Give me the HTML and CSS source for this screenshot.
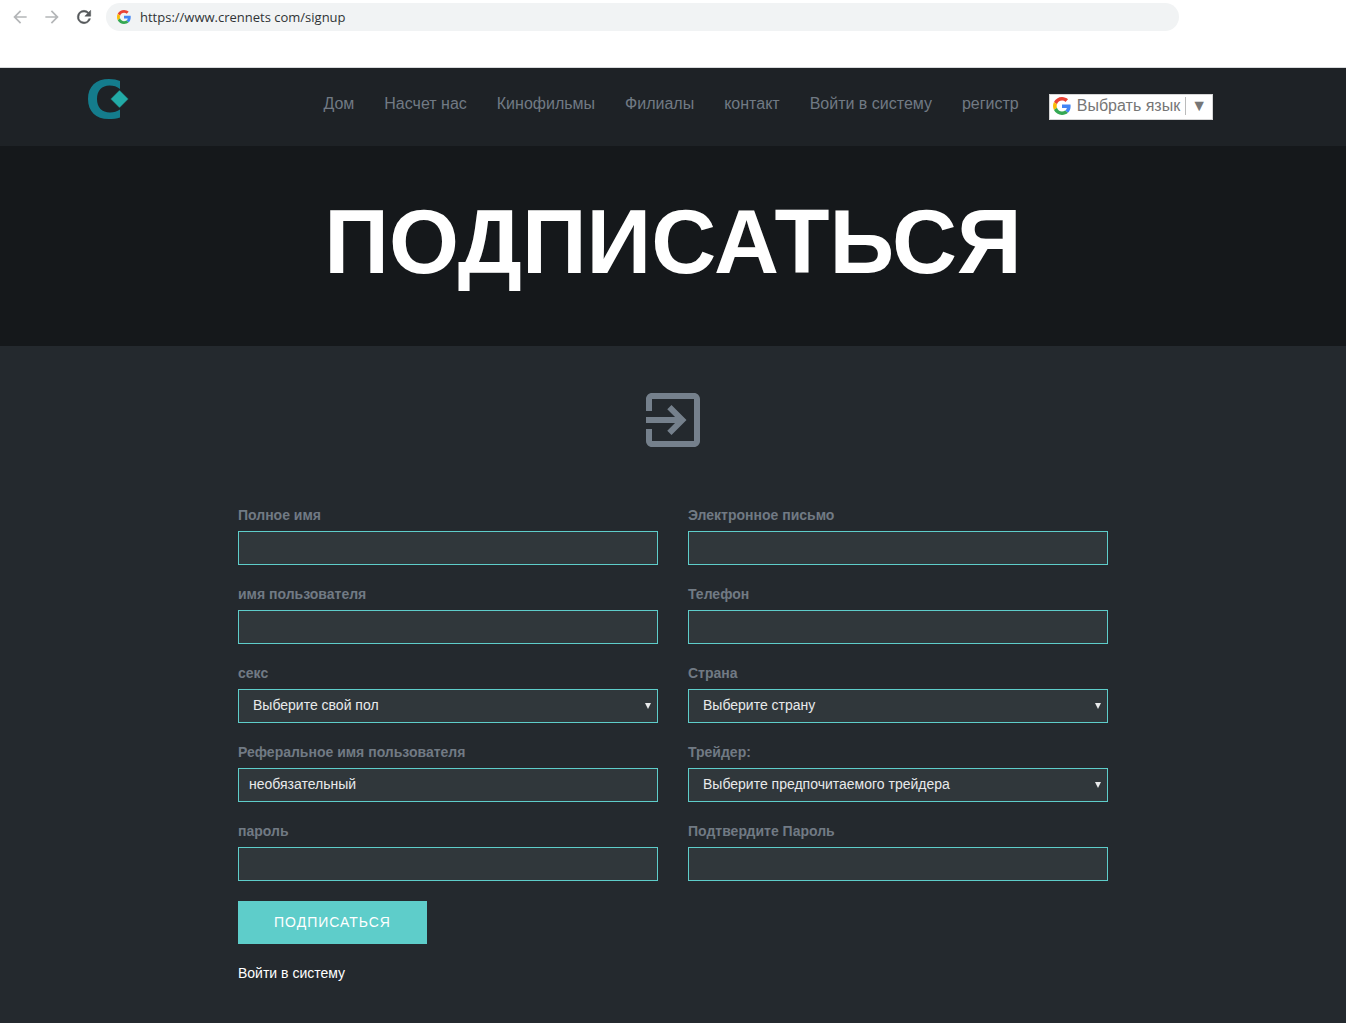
FILE: index.html
```html
<!DOCTYPE html>
<html lang="ru">
<head>
<meta charset="UTF-8">
<meta name="viewport" content="width=device-width, initial-scale=1.0">
<title>Подписаться</title>
<link rel="stylesheet" href="styles.css">
</head>
<body>
<div class="browser-bar">
  <button type="button" class="browser-btn" aria-label="Назад" disabled>
    <svg width="20" height="20" viewBox="0 0 24 24"><path fill="#b4b6b8" d="M20 11H7.83l5.59-5.59L12 4l-8 8 8 8 1.41-1.41L7.83 13H20v-2z"/></svg>
  </button>
  <button type="button" class="browser-btn" aria-label="Вперед" disabled>
    <svg width="20" height="20" viewBox="0 0 24 24"><path fill="#b4b6b8" d="M12 4l-1.41 1.41L16.17 11H4v2h12.17l-5.58 5.59L12 20l8-8z"/></svg>
  </button>
  <button type="button" class="browser-btn" aria-label="Обновить">
    <svg width="20" height="20" viewBox="0 0 24 24"><path fill="#55585b" stroke="#55585b" stroke-width=".6" d="M17.65 6.35A7.96 7.96 0 0 0 12 4a8 8 0 1 0 7.73 10h-2.08A6 6 0 1 1 12 6c1.66 0 3.14.69 4.22 1.78L13 11h7V4l-2.35 2.35z"/></svg>
  </button>
  <div class="address">
    <svg width="14" height="14" viewBox="0 0 48 48">
      <path fill="#ea4335" d="M24 9.5c3.54 0 6.71 1.22 9.21 3.6l6.85-6.85C35.9 2.38 30.47 0 24 0 14.62 0 6.51 5.38 2.56 13.22l7.98 6.19C12.43 13.72 17.74 9.5 24 9.5z"/>
      <path fill="#4285f4" d="M46.98 24.55c0-1.57-.15-3.09-.38-4.55H24v9.02h12.94c-.58 2.96-2.26 5.48-4.78 7.18l7.73 6c4.51-4.18 7.09-10.36 7.09-17.65z"/>
      <path fill="#fbbc05" d="M10.53 28.59A14.5 14.5 0 0 1 9.77 24c0-1.6.27-3.14.76-4.59l-7.98-6.19A23.9 23.9 0 0 0 0 24c0 3.88.92 7.54 2.56 10.78l7.97-6.19z"/>
      <path fill="#34a853" d="M24 48c6.48 0 11.93-2.13 15.89-5.81l-7.73-6c-2.15 1.45-4.92 2.3-8.16 2.3-6.26 0-11.57-4.22-13.47-9.91l-7.98 6.19C6.51 42.62 14.62 48 24 48z"/>
    </svg>
    <input type="text" class="address-input" aria-label="Адрес" value="https://www.crennets com/signup">
  </div>
</div>

<header class="header">
  <div class="container header-inner">
    <a href="#" class="logo" aria-label="Crennets">
      <svg width="41" height="41" viewBox="0 0 41 41">
        <path fill="#147c8c" d="M32 2C29 .7 25.500 0 21 0 8 0 0 7.500 0 20S8 40 20.500 40c4.500 0 8.500-.5 11.500-1.500V30.500c-3 2-6 3-10 3C14 33.500 9 28.500 9 20S14 6.500 21.500 6.500c4 0 7.500 1 10.500 3.500z"/>
        <path fill="#22aaa6" stroke="#1e2226" stroke-width=".5" d="M31.500 11l9 9-9 9-9-9z"/>
      </svg>
    </a>
    <nav class="nav">
      <a href="#">Дом</a>
      <a href="#">Насчет нас</a>
      <a href="#">Кинофильмы</a>
      <a href="#">Филиалы</a>
      <a href="#">контакт</a>
      <a href="#">Войти в систему</a>
      <a href="#">регистр</a>
      <button type="button" class="lang">
        <svg width="18" height="18" viewBox="0 0 48 48">
          <path fill="#ea4335" d="M24 9.5c3.54 0 6.71 1.22 9.21 3.6l6.85-6.85C35.9 2.38 30.47 0 24 0 14.62 0 6.51 5.38 2.56 13.22l7.98 6.19C12.43 13.72 17.74 9.5 24 9.5z"/>
          <path fill="#4285f4" d="M46.98 24.55c0-1.57-.15-3.09-.38-4.55H24v9.02h12.94c-.58 2.96-2.26 5.48-4.78 7.18l7.73 6c4.51-4.18 7.09-10.36 7.09-17.65z"/>
          <path fill="#fbbc05" d="M10.53 28.59A14.5 14.5 0 0 1 9.77 24c0-1.6.27-3.14.76-4.59l-7.98-6.19A23.9 23.9 0 0 0 0 24c0 3.88.92 7.54 2.56 10.78l7.97-6.19z"/>
          <path fill="#34a853" d="M24 48c6.48 0 11.93-2.13 15.89-5.81l-7.73-6c-2.15 1.45-4.92 2.3-8.16 2.3-6.26 0-11.57-4.22-13.47-9.91l-7.98 6.19C6.51 42.62 14.62 48 24 48z"/>
        </svg>
        <span class="lang-text">Выбрать язык</span>
        <span class="lang-arrow">▼</span>
      </button>
    </nav>
  </div>
</header>

<section class="banner">
  <h1>ПОДПИСАТЬСЯ</h1>
</section>

<main class="signup">
  <svg class="signup-icon" width="72" height="72" viewBox="0 0 24 24"><path d="M10.09 15.59L11.5 17l5-5-5-5-1.41 1.41L12.67 11H3v2h9.67l-2.58 2.59zM19 3H5c-1.11 0-2 .9-2 2v4h2V5h14v14H5v-4H3v4c0 1.1.89 2 2 2h14c1.100 0 2-.9 2-2V5c0-1.100-.9-2-2-2z"/></svg>
  <form id="signupForm" class="signup-form">
    <div class="form-grid">
      <div class="form-group">
        <label for="fullName">Полное имя</label>
        <input type="text" id="fullName" name="fullName" class="form-control">
      </div>
      <div class="form-group">
        <label for="email">Электронное письмо</label>
        <input type="email" id="email" name="email" class="form-control">
      </div>
      <div class="form-group">
        <label for="username">имя пользователя</label>
        <input type="text" id="username" name="username" class="form-control">
      </div>
      <div class="form-group">
        <label for="phone">Телефон</label>
        <input type="tel" id="phone" name="phone" class="form-control">
      </div>
      <div class="form-group">
        <label for="sex">секс</label>
        <div class="select-wrap">
          <select id="sex" name="sex" class="form-control">
            <option>Выберите свой пол</option>
          </select>
        </div>
      </div>
      <div class="form-group">
        <label for="country">Страна</label>
        <div class="select-wrap">
          <select id="country" name="country" class="form-control">
            <option>Выберите страну</option>
          </select>
        </div>
      </div>
      <div class="form-group">
        <label for="referral">Реферальное имя пользователя</label>
        <input type="text" id="referral" name="referral" class="form-control" placeholder="необязательный">
      </div>
      <div class="form-group">
        <label for="trader">Трейдер:</label>
        <div class="select-wrap">
          <select id="trader" name="trader" class="form-control">
            <option>Выберите предпочитаемого трейдера</option>
          </select>
        </div>
      </div>
      <div class="form-group">
        <label for="password">пароль</label>
        <input type="password" id="password" name="password" class="form-control">
      </div>
      <div class="form-group">
        <label for="confirmPassword">Подтвердите Пароль</label>
        <input type="password" id="confirmPassword" name="confirmPassword" class="form-control">
      </div>
    </div>
    <button type="submit" class="btn">ПОДПИСАТЬСЯ</button>
    <a href="#" class="login-link">Войти в систему</a>
  </form>
</main>
</body>
</html>
```
FILE: styles.css
```css
* {
  box-sizing: border-box;
}
body {
  margin: 0;
  min-height: 100vh;
  display: flex;
  flex-direction: column;
  font-family: "Liberation Sans", Arial, sans-serif;
  font-size: 14px;
  line-height: 20px;
  background-color: #24292e;
}
a {
  text-decoration: none;
}
button,
input,
select {
  font-family: inherit;
}
svg {
  display: block;
  flex: none;
}

/* browser bar */
.browser-bar {
  display: flex;
  align-items: flex-start;
  gap: 12px;
  height: 68px;
  padding: 3px 167px 0 10px;
  background-color: #fff;
  border-bottom: 1px solid #d8dadc;
}
.browser-btn {
  padding: 4px 0;
  border: none;
  background: none;
}
.address {
  flex: 1;
  display: flex;
  align-items: center;
  gap: 9px;
  height: 28px;
  padding: 0 11px;
  border-radius: 14px;
  background-color: #f1f3f4;
}
.address-input {
  flex: 1;
  padding: 0;
  border: none;
  background: none;
  color: #303336;
  font-family: "Open Sans", sans-serif;
  font-size: 13px;
}

/* header */
.container {
  width: 100%;
  max-width: 1170px;
  margin: 0 auto;
}
.header {
  background-color: #1e2226;
}
.header-inner {
  display: flex;
  justify-content: space-between;
  align-items: flex-start;
  height: 78px;
  padding: 11px 45px 0 0;
}
.nav {
  display: flex;
  gap: 30px;
  padding-top: 15px;
  font-size: 16px;
}
.nav a {
  color: #717a84;
}
.lang {
  display: flex;
  align-items: center;
  height: 26px;
  padding: 0 5px 2px 3px;
  border: 1px solid #d5d5d5;
  background-color: #fff;
  color: #767676;
  font-size: 16px;
}
.lang-text {
  margin-left: 6px;
  padding-right: 5px;
  border-right: 1px solid #bbb;
}
.lang-arrow {
  padding-left: 5px;
}

/* banner */
.banner {
  display: flex;
  justify-content: center;
  align-items: center;
  height: 200px;
  background-color: #15181b;
}
.banner h1 {
  margin: 0;
  padding-bottom: 8px;
  color: #fff;
  font-size: 90px;
  line-height: 100px;
}

/* form */
.signup {
  padding: 38px 0 40px;
}
.signup-icon {
  margin: 0 auto 50px;
  fill: #75808c;
}
.signup-form {
  max-width: 870px;
  margin: 0 auto;
}
.form-grid {
  display: grid;
  grid-template-columns: 1fr 1fr;
  gap: 20px 30px;
  margin-bottom: 20px;
}
.form-group label {
  display: block;
  margin-bottom: 7px;
  color: #717a84;
  font-weight: bold;
  line-height: 18px;
}
.form-control {
  display: block;
  width: 100%;
  height: 34px;
  padding: 0 10px 2px;
  border: 1px solid #5ecdca;
  border-radius: 0;
  background-color: #30373b;
  color: #e8eaeb;
  font-size: 14px;
}
.form-control::placeholder {
  color: #e8eaeb;
}
.select-wrap {
  position: relative;
}
.select-wrap select {
  appearance: none;
  padding-left: 14px;
}
.select-wrap::after {
  content: "";
  position: absolute;
  top: 14px;
  right: 7px;
  border: 3px solid transparent;
  border-top: 6px solid #e8eaeb;
  border-bottom: none;
  pointer-events: none;
}
.btn {
  display: block;
  padding: 11px 36px 12px;
  border: none;
  background-color: #5ecdca;
  color: #fff;
  font-size: 14px;
  line-height: 20px;
  letter-spacing: 1px;
  cursor: pointer;
}
.login-link {
  display: inline-block;
  margin-top: 19px;
  color: #fff;
}
```
